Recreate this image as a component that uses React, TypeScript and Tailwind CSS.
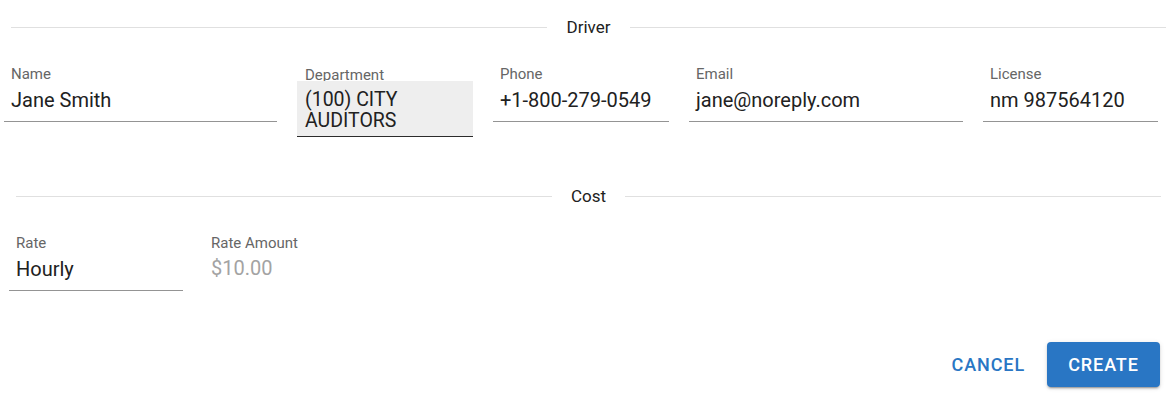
import React from "react";

function Divider({ label, ml, mr, gap }: { label: string; ml: string; mr: string; gap: string }) {
  return (
    <div className={`flex h-[20px] items-center ${ml} ${mr}`}>
      <div className="h-px flex-1 bg-[#e0e0e0]" />
      <span className={`text-[17px] leading-[20px] text-[#212121] ${gap}`}>{label}</span>
      <div className="h-px flex-1 bg-[#e0e0e0]" />
    </div>
  );
}

function Field({ label, value, width }: { label: string; value: string; width: string }) {
  return (
    <div className={`${width} shrink-0`}>
      <div className="px-[7px] text-[15px] leading-[18px] text-[#666666]">{label}</div>
      <div className="mt-[5px] border-b border-[#949494] px-[7px] pb-[9px] text-[20px] leading-[24px] text-[#212121]">
        {value}
      </div>
    </div>
  );
}

export default function App() {
  return (
    <div
      className="relative h-[402px] w-[1173px] overflow-hidden bg-white"
      style={{ fontFamily: "Roboto, 'Liberation Sans', sans-serif" }}
    >
      <div className="pt-[17px]">
        <Divider label="Driver" ml="ml-[11px]" mr="mr-[7px]" gap="px-[20px]" />
      </div>

      <div className="mt-[28px] ml-[4px] flex items-start gap-[20px]">
        <Field label="Name" value="Jane Smith" width="w-[273px]" />
        <div className="mt-[1px] w-[176px] shrink-0">
          <div className="relative z-0 px-[8px] text-[15px] leading-[18px] text-[#666666]">Department</div>
          <div className="relative z-10 -mt-[3px] border-b border-[#2b2b2b] bg-[#eeeeee] px-[8px] pt-[9px] pb-[6px] text-[19.5px] text-[#212121]">
            <div className="h-[21px] leading-[20px]">(100) CITY</div>
            <div className="h-[19px] leading-[20px]">AUDITORS</div>
          </div>
        </div>
        <Field label="Phone" value="+1-800-279-0549" width="w-[176px]" />
        <Field label="Email" value="jane@noreply.com" width="w-[274px]" />
        <Field label="License" value="nm 987564120" width="w-[175px]" />
      </div>

      <div className="mt-[49px]">
        <Divider label="Cost" ml="ml-[16px]" mr="mr-[12px]" gap="px-[19px]" />
      </div>

      <div className="mt-[28px] ml-[9px] flex items-start gap-[20px]">
        <Field label="Rate" value="Hourly" width="w-[174px]" />
        <div className="w-[180px] shrink-0">
          <div className="px-[8px] text-[15px] leading-[18px] text-[#666666]">Rate Amount</div>
          <div className="mt-[4px] px-[8px] text-[20px] leading-[24px] text-[#a3a3a3]">$10.00</div>
        </div>
      </div>

      <div className="mt-[51px] mr-[13px] flex items-center justify-end gap-[14px]">
        <button className="h-[45px] rounded-[4px] px-[8px] text-[18px] font-medium tracking-[0.05em] text-[#2976c4]">
          CANCEL
        </button>
        <button className="flex h-[45px] w-[113px] items-center justify-center rounded-[4px] bg-[#2976c4] text-[18px] font-medium tracking-[0.05em] text-white shadow-[0_3px_1px_-2px_rgba(0,0,0,0.2),0_2px_2px_0_rgba(0,0,0,0.14),0_1px_5px_0_rgba(0,0,0,0.12)]">
          CREATE
        </button>
      </div>
    </div>
  );
}
